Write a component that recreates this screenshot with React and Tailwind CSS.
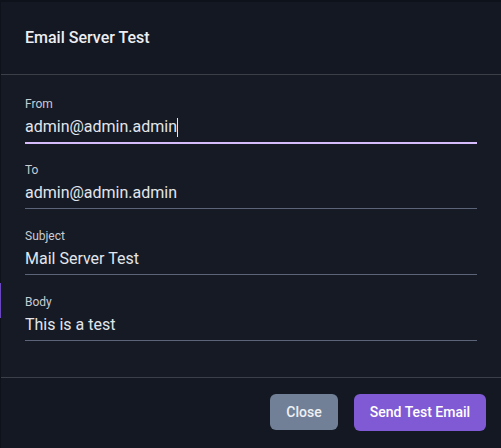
import React from 'react';

const fields = [
  { label: 'From', value: 'admin@admin.admin', focused: true },
  { label: 'To', value: 'admin@admin.admin' },
  { label: 'Subject', value: 'Mail Server Test' },
  { label: 'Body', value: 'This is a test' },
];

function Field({ label, value, focused }) {
  return (
    <div className="flex flex-col">
      <label className="h-4 text-[12px] leading-4 text-[#c8ccd3]">{label}</label>
      <div
        className={`h-[31px] flex items-center border-b text-[16px] text-[#e2e6ec] ${
          focused ? 'border-[#d6bcfa] shadow-[0_1px_0_0_#d6bcfa]' : 'border-[#5b6478]'
        }`}
      >
        <span>{value}</span>
        {focused && <span className="w-px h-[19px] bg-[#e2e6ec]"></span>}
      </div>
    </div>
  );
}

export default function App() {
  return (
    <div
      className="w-[501px] h-[448px] overflow-hidden bg-[#0e121a] flex"
      style={{ fontFamily: 'Roboto, "Noto Sans", sans-serif' }}
    >
      {/* page behind the modal, only a sliver shows */}
      <div className="w-px shrink-0 flex flex-col">
        <div className="h-[283px]"></div>
        <div className="h-[35px] bg-[#6b46c1]"></div>
      </div>
      <div className="flex-1 mt-[2px] flex flex-col bg-[#151a25]">
        <div className="h-[73px] shrink-0 flex items-center px-6 bg-[#131822] border-b border-[#3a3f48]">
          <h2 className="text-[16px] font-medium text-[#eceef2]">Email Server Test</h2>
        </div>
        <div className="px-6 pt-[21px] pb-9 flex flex-col gap-[19px] border-b border-[#3a3f48]">
          {fields.map((f) => (
            <Field key={f.label} {...f} />
          ))}
        </div>
        <div className="flex-1 flex justify-end items-start gap-4 pt-4 pr-[15px] bg-[#131822]">
          <button className="h-9 w-[68px] rounded-md bg-[#718096] text-[14px] font-medium text-[#eef0f4]">
            Close
          </button>
          <button className="h-[37px] w-[132px] rounded-md bg-[#805ad5] text-[14px] font-medium text-white">
            Send Test Email
          </button>
        </div>
      </div>
    </div>
  );
}
